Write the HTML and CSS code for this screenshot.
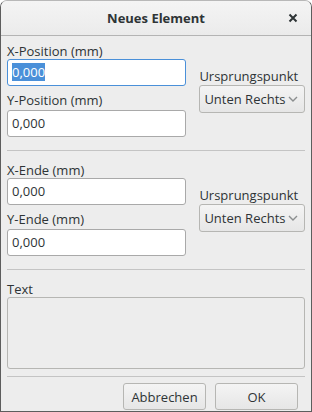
FILE: index.html
```html
<!DOCTYPE html>
<html>
<head>
    <link rel="stylesheet" href="styles.css">
</head>
<body>
    <div class="window">
        <div class="titlebar">
            <span class="title">Neues Element</span>
            <svg class="close" width="10" height="10" viewBox="0 0 10 10"><path d="M1.5 1.5 L8.5 8.5 M8.5 1.5 L1.5 8.5" stroke="#2e3436" stroke-width="2"/></svg>
        </div>

        <div class="section first">
            <div class="fields">
                <label class="field-label">X-Position (mm)</label>
                <div class="input focused"><span class="selected">0,000</span></div>
                <label class="field-label next">Y-Position (mm)</label>
                <div class="input">0,000</div>
            </div>
            <div class="origin">
                <label class="field-label">Ursprungspunkt</label>
                <div class="combo">
                    <span>Unten Rechts</span>
                    <svg class="chevron" width="10" height="6" viewBox="0 0 10 6"><path d="M1 1 L5 5 L9 1" fill="none" stroke="#8b8e8f" stroke-width="1.4"/></svg>
                </div>
            </div>
        </div>

        <div class="separator"></div>

        <div class="section">
            <div class="fields">
                <label class="field-label">X-Ende (mm)</label>
                <div class="input">0,000</div>
                <label class="field-label next">Y-Ende (mm)</label>
                <div class="input">0,000</div>
            </div>
            <div class="origin">
                <label class="field-label">Ursprungspunkt</label>
                <div class="combo">
                    <span>Unten Rechts</span>
                    <svg class="chevron" width="10" height="6" viewBox="0 0 10 6"><path d="M1 1 L5 5 L9 1" fill="none" stroke="#8b8e8f" stroke-width="1.4"/></svg>
                </div>
            </div>
        </div>

        <div class="separator"></div>

        <div class="text-section">
            <label class="field-label">Text</label>
            <div class="textarea"></div>
        </div>

        <div class="separator"></div>

        <div class="actions">
            <button class="btn">Abbrechen</button>
            <button class="btn">OK</button>
        </div>
    </div>
</body>
</html>
```

FILE: styles.css
```css
body {
    margin: 0;
    background: #ffffff;
    font-family: "Open Sans", "Noto Sans", sans-serif;
    font-size: 13px;
    color: #2e3436;
}

.window {
    width: 312px;
    height: 412px;
    box-sizing: border-box;
    border: 1px solid #5d5d5d;
    border-top-color: #b8b8b8;
    border-radius: 7px 7px 0 0;
    background: #ededed;
    display: flex;
    flex-direction: column;
    overflow: hidden;
}

.titlebar {
    height: 34px;
    flex-shrink: 0;
    border-bottom: 1px solid #b4b4b4;
    background: linear-gradient(to bottom, #f4f4f4, #ebebeb);
    display: flex;
    align-items: center;
    justify-content: center;
    position: relative;
}

.title {
    font-weight: bold;
    font-size: 13px;
    color: #2e3436;
}

.close {
    position: absolute;
    right: 13px;
    top: 12px;
}

.section {
    display: flex;
    align-items: center;
    gap: 13px;
    padding: 11px 6px 13px 6px;
}

.section.first {
    padding-top: 7px;
}

.fields {
    width: 180px;
    display: flex;
    flex-direction: column;
}

.field-label {
    display: block;
    height: 16px;
    line-height: 16px;
}

.fields .field-label.next {
    margin-top: 6px;
    margin-bottom: 2px;
}

.input {
    height: 27px;
    box-sizing: border-box;
    border: 1px solid #a9a9a9;
    border-radius: 3px;
    background: #ffffff;
    padding: 0 4px;
    line-height: 25px;
}

.input.focused {
    border-color: #4a90d9;
}

.selected {
    background: #4a90d9;
    color: #ffffff;
    display: inline-block;
    line-height: 18px;
}

.origin {
    width: 106px;
    display: flex;
    flex-direction: column;
}

.origin .field-label {
    margin-bottom: 1px;
}

.combo {
    height: 28px;
    box-sizing: border-box;
    border: 1px solid #b6b6b3;
    border-radius: 3px;
    background: linear-gradient(to bottom, #f4f4f4, #e6e6e6);
    display: flex;
    align-items: center;
    justify-content: space-between;
    padding: 0 6px 0 4px;
}

.separator {
    height: 1px;
    margin: 0 6px;
    background: #c4c4c4;
    flex-shrink: 0;
}

.text-section {
    padding: 11px 6px 7px 6px;
}

.textarea {
    height: 72px;
    box-sizing: border-box;
    border: 1px solid #b6b6b3;
    border-radius: 3px;
    background: #ededed;
}

.actions {
    display: flex;
    justify-content: flex-end;
    gap: 9px;
    padding: 6px 13px 0 0;
}

.btn {
    width: 83px;
    height: 27px;
    border: 1px solid #b6b6b3;
    border-radius: 3px;
    background: linear-gradient(to bottom, #f4f4f4, #e6e6e6);
    font-family: "Open Sans", "Noto Sans", sans-serif;
    font-size: 13px;
    color: #2e3436;
    padding: 0;
}
```
